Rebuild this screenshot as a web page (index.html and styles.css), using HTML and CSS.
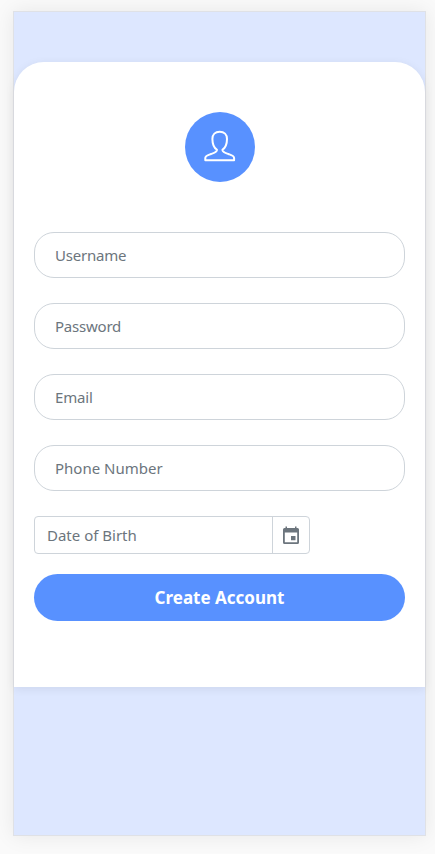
FILE: index.html
```html
<!DOCTYPE html>
<html lang="en">
<head>
<meta charset="utf-8">
<title>Create Account</title>
<link rel="stylesheet" href="styles.css">
</head>
<body>
<main class="phone">
  <form class="card">
    <div class="avatar">
      <svg width="34" height="34" viewBox="0 0 34 34" fill="none" stroke="#fff" stroke-width="2" stroke-linejoin="round">
        <path d="M16.700 1.700C12.200 1.700 9.400 4.500 9.400 8.900C9.400 14.300 10.800 17.600 14 19.800C13.600 22.200 11.200 22.900 8 24C4.700 25.200 2.300 25.800 2.300 27.900V30.300H31.100V27.900C31.100 25.800 28.700 25.200 25.400 24C22.200 22.900 19.800 22.200 19.400 19.800C22.600 17.600 24 14.300 24 8.900C24 4.500 21.200 1.700 16.700 1.700Z"/>
      </svg>
    </div>
    <input class="field username" type="text" placeholder="Username">
    <input class="field password" type="password" placeholder="Password">
    <input class="field email" type="email" placeholder="Email">
    <input class="field phone-number" type="tel" placeholder="Phone Number">
    <div class="date">
      <input class="date-input" type="text" placeholder="Date of Birth">
      <button class="date-button" type="button" aria-label="Choose date">
        <svg width="18" height="20" viewBox="0 0 18 20" fill="#6c757d">
          <path d="M3.500 1.500H5V3H13V1.500H14.500V3H15.500A1.500 1.500 0 0 1 17 4.500V17.500A1.500 1.500 0 0 1 15.500 19H2.500A1.500 1.500 0 0 1 1 17.500V4.500A1.500 1.500 0 0 1 2.500 3H3.500ZM2.800 7.500V17.200H15.200V7.500ZM9 11H13.500V15.200H9Z" fill-rule="evenodd"/>
        </svg>
      </button>
    </div>
    <button class="submit" type="button">Create Account</button>
  </form>
</main>
</body>
</html>
```
FILE: styles.css
```css
* { box-sizing: border-box; }

body {
  margin: 0;
  height: 854px;
  padding: 11px 9px 18px 13px;
  overflow: hidden;
  background: #fafafa;
  font-family: "Noto Sans", "Open Sans", sans-serif;
}

.phone {
  height: 825px;
  padding-top: 50px;
  border: 1px solid #dfe1e6;
  background: #dde7ff;
  box-shadow: 0 0 20px rgba(0, 0, 0, 0.08);
}

.card {
  display: flex;
  flex-direction: column;
  height: 625px;
  padding: 50px 20px 0;
  border-radius: 30px 30px 0 0;
  background: #fff;
  box-shadow: 0 2px 10px rgba(0, 0, 0, 0.075);
}

.avatar {
  display: flex;
  align-items: center;
  justify-content: center;
  width: 70px;
  height: 70px;
  margin: 0 auto 50px;
  border-radius: 50%;
  background: #5891ff;
}

input, button {
  margin: 0;
  font-family: inherit;
}

input::placeholder { color: #6c757d; opacity: 1; }

.field {
  width: 100%;
  height: 46px;
  margin-bottom: 25px;
  padding: 0 20px;
  border: 1px solid #ced4da;
  border-radius: 20px;
  background: #fff;
  font-size: 15px;
}

.username, .password { letter-spacing: -0.22px; }
.email { letter-spacing: -0.15px; }

.date {
  display: flex;
  width: 276px;
  height: 38px;
  margin-bottom: 20px;
  border: 1px solid #ced4da;
  border-radius: 4px;
}

.date-input {
  width: 237px;
  padding: 0 12px;
  border: 0;
  background: transparent;
  font-size: 15px;
}

.date-button {
  display: flex;
  flex: 1;
  align-items: center;
  justify-content: center;
  padding: 0;
  border: 0;
  border-left: 1px solid #ced4da;
  background: transparent;
}

.submit {
  height: 47px;
  padding: 0;
  border: 0;
  border-radius: 23.5px;
  background: #5891ff;
  color: #fff;
  font-size: 17px;
  font-weight: 700;
}
```
